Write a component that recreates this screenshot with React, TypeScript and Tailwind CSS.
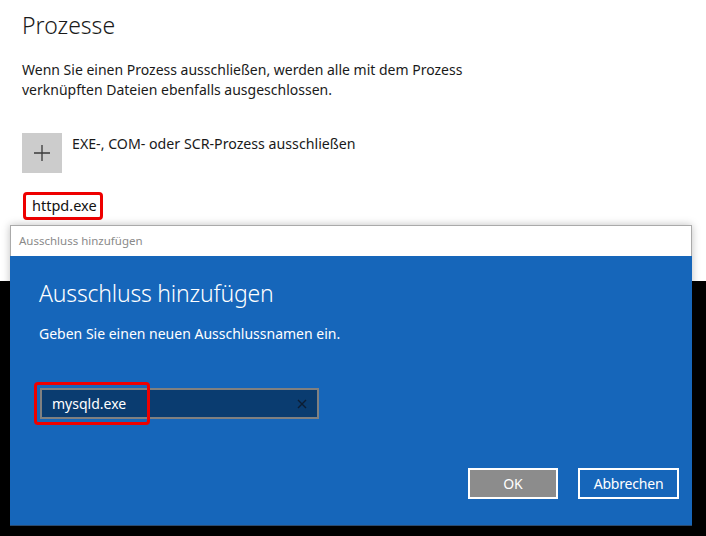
import React from "react";

const font = { fontFamily: '"Noto Sans", "Open Sans", sans-serif' };

export default function App() {
  return (
    <div className="relative w-[706px] h-[536px] overflow-hidden flex flex-col" style={font}>
      <div className="h-[281px] bg-white flex flex-col pl-[22px]">
        <div className="mt-[10px] text-[23px] leading-[30px] text-[#1a1a1a] font-light">Prozesse</div>
        <div className="mt-[20px] text-[14px] leading-[20px] text-[#1a1a1a]">
          <div>Wenn Sie einen Prozess ausschließen, werden alle mit dem Prozess</div>
          <div>verknüpften Dateien ebenfalls ausgeschlossen.</div>
        </div>
        <div className="mt-[33px] flex items-start gap-[10px]">
          <div className="w-[40px] h-[40px] bg-[#cccccc] flex items-center justify-center">
            <svg width="18" height="18" viewBox="0 0 18 18">
              <path d="M9 1V17M1 9H17" stroke="#3a3a3a" strokeWidth="1.3" fill="none" />
            </svg>
          </div>
          <div className="mt-[1px] text-[14.2px] leading-[20px] text-[#1a1a1a]">EXE-, COM- oder SCR-Prozess ausschließen</div>
        </div>
        <div className="mt-[19px] ml-[1px] w-[80px] h-[28px] border-[3px] border-[#ee0000] rounded-[4px] flex items-center pl-[6px] text-[14.5px] text-[#111]">
          httpd.exe
        </div>
      </div>
      <div className="flex-1 bg-black" />

      <div className="absolute left-[10px] top-[225px] w-[682px] h-[301px] flex flex-col shadow-[0_0_8px_rgba(0,0,0,0.25)]">
        <div className="h-[31px] bg-white border border-b-0 border-[#aaaaaa] flex items-center pl-[8px] text-[11.5px] text-[#8a8a8a]">
          Ausschluss hinzufügen
        </div>
        <div className="flex-1 bg-[#1666ba] border-b border-[#2b4a6e] flex flex-col pl-[29px] pr-[13px]">
          <div className="mt-[22px] text-[23px] leading-[30px] text-white font-light tracking-[-0.2px]">Ausschluss hinzufügen</div>
          <div className="mt-[16px] text-[14px] leading-[20px] text-white">Geben Sie einen neuen Ausschlussnamen ein.</div>
          <div className="relative mt-[44px] ml-[1px] w-[279px] h-[31px] bg-[#0a3c70] border-2 border-[#808080] flex items-center pl-[10px] text-[14px] text-white">
            mysqld.exe
            <svg className="absolute right-[10px] top-[9px]" width="10" height="10" viewBox="0 0 10 10">
              <path d="M1 1L9 9M9 1L1 9" stroke="#0c1d33" strokeWidth="1.4" fill="none" />
            </svg>
            <div className="absolute left-[-8px] top-[-8px] w-[116px] h-[43px] border-[3px] border-[#ee0000] rounded-[4px]" />
          </div>
          <div className="mt-auto mb-[26px] flex justify-end gap-[20px] text-[14px] text-white">
            <div className="w-[90px] h-[31px] bg-[#8c8c8c] border-2 border-white flex items-center justify-center">OK</div>
            <div className="w-[101px] h-[31px] border-2 border-white flex items-center justify-center tracking-[-0.2px]">Abbrechen</div>
          </div>
        </div>
      </div>
    </div>
  );
}
